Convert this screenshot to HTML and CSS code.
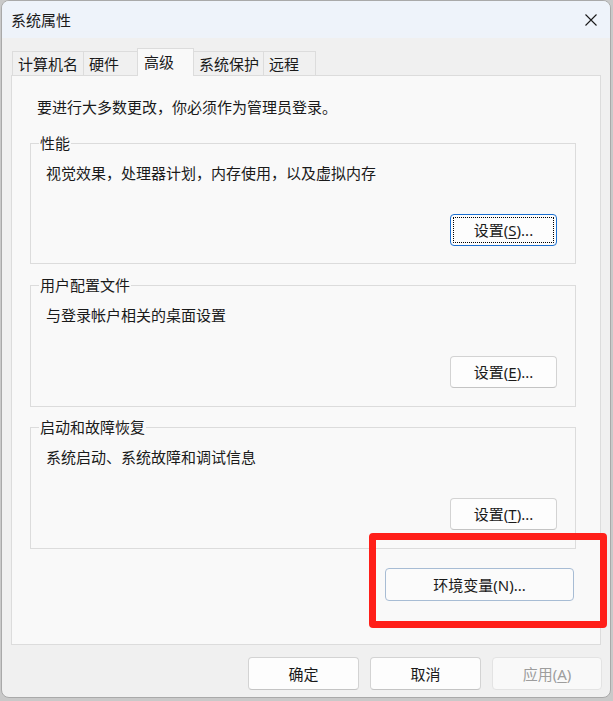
FILE: index.html
```html
<!DOCTYPE html>
<html lang="zh-CN">
<head>
<meta charset="utf-8">
<title>系统属性</title>
<link rel="stylesheet" href="styles.css">
</head>
<body>
<div class="window">
  <div class="titlebar">
    <span class="title">系统属性</span>
    <svg class="close" width="12" height="12" viewBox="0 0 12 12"><path d="M0.5 0.5 L11.5 11.5 M11.5 0.5 L0.5 11.5" stroke="#1a1a1a" stroke-width="1.1" fill="none"/></svg>
  </div>
  <div class="body">
    <div class="tabs">
      <div class="tab t1">计算机名</div>
      <div class="tab t2">硬件</div>
      <div class="tab t3 active">高级</div>
      <div class="tab t4">系统保护</div>
      <div class="tab t5">远程</div>
    </div>
    <div class="panel">
      <div class="intro">要进行大多数更改，你必须作为管理员登录。</div>
      <div class="group g1">
        <span class="legend">性能</span>
        <div class="gtext">视觉效果，处理器计划，内存使用，以及虚拟内存</div>
        <button class="btn set focused">设置(<u>S</u>)...</button>
      </div>
      <div class="group g2">
        <span class="legend">用户配置文件</span>
        <div class="gtext">与登录帐户相关的桌面设置</div>
        <button class="btn set">设置(<u>E</u>)...</button>
      </div>
      <div class="group g3">
        <span class="legend">启动和故障恢复</span>
        <div class="gtext">系统启动、系统故障和调试信息</div>
        <button class="btn set">设置(<u>T</u>)...</button>
      </div>
      <button class="btn env">环境变量(N)...</button>
    </div>
    <div class="footer">
      <button class="btn foot">确定</button>
      <button class="btn foot">取消</button>
      <button class="btn foot disabled">应用(<u>A</u>)</button>
    </div>
  </div>
  <div class="highlight"></div>
</div>
</body>
</html>
```
FILE: styles.css
```css
* { box-sizing: border-box; }
html, body { margin: 0; padding: 0; }
body {
  width: 613px;
  height: 701px;
  background: #c9c9c9;
  font-family: "Noto Sans", "Noto Sans CJK SC", sans-serif;
  font-size: 15px;
  color: #1a1a1a;
  overflow: hidden;
}
.window {
  position: relative;
  margin-left: 1px;
  width: 610px;
  height: 698px;
  border: 1px solid #a9a9a9;
  border-radius: 8px;
  overflow: hidden;
  background: #f0f0f0;
}
.titlebar {
  height: 37px;
  background: #eef3fa;
  display: flex;
  align-items: center;
  justify-content: space-between;
  padding-left: 9px;
  padding-right: 13px;
}
.title { line-height: 20px; }
.close { display: block; }
.body {
  padding: 10px 10px 0 9px;
  background: #f0f0f0;
}
.tabs {
  display: flex;
  align-items: flex-end;
  height: 27px;
  padding-left: 1px;
}
.tab {
  height: 24px;
  border: 1px solid #dcdcdc;
  border-bottom: none;
  margin-right: -1px;
  padding: 2px 0 0 5px;
  line-height: 20px;
  background: #f0f0f0;
  white-space: nowrap;
}
.t1 { width: 72px; }
.t2 { width: 55px; }
.t3 { width: 57px; }
.t4 { width: 71px; }
.t5 { width: 53px; }
.tab.active {
  height: 28px;
  margin-bottom: -1px;
  position: relative;
  z-index: 1;
  background: #f9f9f9;
  padding-top: 3px;
  padding-left: 6px;
}
.panel {
  width: 590px;
  height: 570px;
  background: #f9f9f9;
  border: 1px solid #dcdcdc;
  display: flex;
  flex-direction: column;
  align-items: flex-start;
}
.intro {
  margin-top: 21px;
  margin-left: 25px;
  line-height: 20px;
}
.group {
  position: relative;
  margin-left: 18px;
  width: 546px;
  height: 122px;
  border: 1px solid #dcdcdc;
  display: flex;
  flex-direction: column;
  align-items: flex-start;
  margin-top: 20px;
}
.g1 { margin-top: 26px; height: 121px; }
.g2 { margin-top: 21px; }
.legend {
  position: absolute;
  top: -11px;
  left: 8px;
  padding: 0 1px;
  background: #f9f9f9;
  line-height: 20px;
}
.gtext {
  margin-top: 19px;
  margin-left: 15px;
  line-height: 20px;
}
.btn {
  font-family: "Noto Sans", "Noto Sans CJK SC", sans-serif;
  font-size: 15px;
  color: #1a1a1a;
  background: #fdfdfd;
  border: 1px solid #d3d3d3;
  border-bottom-color: #c4c4c4;
  border-radius: 4px;
  padding: 0;
  line-height: 20px;
  position: relative;
}
.btn u { text-underline-offset: 2px; }
.set {
  align-self: flex-end;
  margin-right: 18px;
  margin-top: 31px;
  width: 107px;
  height: 32px;
}
.focused {
  border-color: #1b6fd0;
}
.focused::after {
  content: "";
  position: absolute;
  inset: 2px;
  border: 1px dotted #000;
  border-radius: 1px;
}
.env {
  align-self: flex-end;
  margin-right: 26px;
  margin-top: 19px;
  width: 189px;
  height: 33px;
  border-color: #a7bcd4;
  background: #fbfbfb;
}
.footer {
  display: flex;
  justify-content: flex-end;
  gap: 11px;
  padding-top: 12px;
  padding-right: -2px;
  margin-right: -2px;
}
.foot {
  width: 111px;
  height: 33px;
}
.foot.disabled {
  width: 110px;
  color: #9d9d9d;
  border-color: #e3e3e3;
  background: #f9f9f9;
}
.highlight {
  position: absolute;
  left: 367px;
  top: 532px;
  width: 238px;
  height: 95px;
  border: 7px solid #ff1f19;
  border-radius: 4px;
  pointer-events: none;
}
```
